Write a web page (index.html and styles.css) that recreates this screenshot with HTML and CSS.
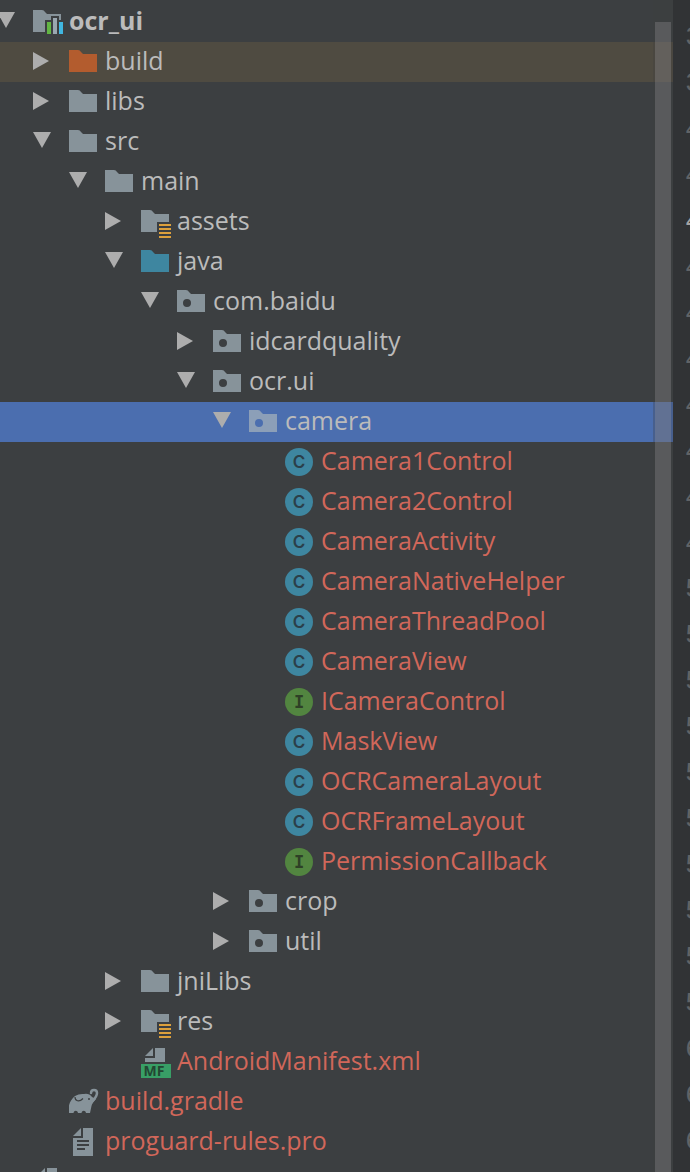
FILE: index.html
```html
<!DOCTYPE html>
<html lang="en">
<head>
<meta charset="UTF-8" />
<meta name="viewport" content="width=device-width, initial-scale=1" />
<title>ocr_ui</title>
<link rel="stylesheet" href="styles.css">
</head>
<body>

<!-- shared icons -->
<svg class="sprite" aria-hidden="true">
  <symbol id="open" viewBox="0 0 28 28"><path d="M0 4h18L9 20z" fill="#adadad"/></symbol>
  <symbol id="closed" viewBox="0 0 28 28"><path d="M0 4l16 9-16 9z" fill="#adadad"/></symbol>
  <symbol id="folder" viewBox="0 0 32 32"><path d="M0 4h9q2 0 3 2l2 2h14v18H0z" fill="currentColor"/></symbol>
  <symbol id="package" viewBox="0 0 32 32"><path fill-rule="evenodd" d="M0 4h9q2 0 3 2l2 2h14v18H0zM10 13a4 4 0 1 0 0 8 4 4 0 0 0 0-8z" fill="currentColor"/></symbol>
  <symbol id="resources" viewBox="0 0 32 32">
    <path d="M0 4h9q2 0 3 2l2 2h14v8H16v10H0z" fill="currentColor"/>
    <path d="M18 18h12v2H18zM18 22h12v2H18zM18 26h12v2H18zM18 30h12v2H18z" fill="#dca03c"/>
  </symbol>
  <symbol id="module" viewBox="0 0 32 32">
    <path d="M0 4h9q2 0 3 2l2 2h14v6h-2v-4h-8v4h-6v12H0z" fill="currentColor"/>
    <path d="M14 16h4v12h-4z" fill="#62b543"/>
    <path d="M20 12h4v16h-4z" fill="#9aa7b0"/>
    <path d="M26 16h4v12h-4z" fill="#40b6e0"/>
  </symbol>
  <symbol id="class" viewBox="0 0 32 32">
    <circle cx="14" cy="16" r="14" fill="#3e86a0"/>
    <text class="badge" x="14" y="22" fill="#2b3f49">C</text>
  </symbol>
  <symbol id="interface" viewBox="0 0 32 32">
    <circle cx="14" cy="16" r="14" fill="#528540"/>
    <text class="badge serifed" x="14" y="22" fill="#2e4026">I</text>
  </symbol>
  <symbol id="manifest" viewBox="0 0 32 32">
    <path d="M4 10l8-8v8zM14 2h10v14H4v-4h10z" fill="currentColor"/>
    <path d="M0 18h30v14H0z" fill="#389f66"/>
    <text class="badge bold" x="13" y="30" fill="#234733">MF</text>
  </symbol>
  <symbol id="gradle" viewBox="0 0 32 32">
    <path d="M-1 27C-1 20 1 14 6 10q4-2.500 9-2 5-1 8 3l4 2q-4 4-4.500 7L21 27h-4c-.500-3-4-3-4.500 0H9c-.500-3-4-3-4.500 0z" fill="currentColor"/>
    <path d="M22 7c0-4 6-4 6 0 0 4-3 6-6 10" fill="none" stroke="currentColor" stroke-width="2.500" stroke-linecap="round"/>
    <path d="M6 11c0 4 4 5.500 8 1.500" fill="none" stroke="#3c3f41" stroke-width="1.200"/>
    <circle cx="20" cy="13" r="1" fill="#3c3f41"/>
  </symbol>
  <symbol id="text" viewBox="0 0 32 32">
    <path fill-rule="evenodd" d="M4 10l8-8v8zM14 2h10v28H4V12h10zM8 14v2h12v-2zM8 18v2h12v-2zM8 22v2h8v-2z" fill="currentColor"/>
  </symbol>
</svg>

<main class="window">
  <nav class="project" aria-label="Project">
    <ul class="tree" id="tree"></ul>
    <div class="scrollbar"><div class="thumb"></div></div>
  </nav>
  <ol class="gutter" id="gutter"></ol>
</main>

<script src="tree.js"></script>
</body>
</html>
```
FILE: styles.css
```css
* {
  box-sizing: border-box;
}
body {
  margin: 0;
  background: #313335;
  color: #bbbbbb;
  font-family: "Open Sans", "Noto Sans", sans-serif;
  font-size: 25px;
}
.sprite {
  display: none;
}
.badge {
  font-family: Inter, sans-serif;
  font-size: 17px;
  font-weight: 600;
  text-anchor: middle;
}
.badge.serifed {
  font-family: "DejaVu Sans Mono", monospace;
  font-weight: bold;
}
.badge.bold {
  font-family: "Open Sans", sans-serif;
  font-size: 14px;
  font-weight: bold;
}
.window {
  display: flex;
  height: 100vh;
  overflow: hidden;
}
.project {
  position: relative;
  flex: 1;
  overflow: hidden;
  background: #3c3f41;
}
.tree {
  list-style: none;
  margin: 0 0 0 -3px;
  padding: 2px 0 0;
}
.row {
  display: flex;
  align-items: center;
  height: 40px;
  white-space: nowrap;
}
.row.excluded {
  background: #4f4b41;
}
.row.selected {
  background: #4b6eaf;
}
.level-1 { padding-left: 36px; }
.level-2 { padding-left: 72px; }
.level-3 { padding-left: 108px; }
.level-4 { padding-left: 144px; }
.level-5 { padding-left: 180px; }
.level-6 { padding-left: 216px; }
.level-7 { padding-left: 252px; }
.toggle {
  flex: none;
  width: 36px;
  height: 28px;
  padding: 0;
  border: none;
  background: none;
}
.toggle svg {
  display: block;
  width: 28px;
  height: 28px;
}
.icon {
  flex: none;
  width: 32px;
  height: 32px;
  margin-right: 4px;
  color: #87939a;
}
.selected .icon {
  color: #8c9fb8;
}
.build {
  color: #b35c2e;
}
.source {
  color: #3e86a0;
}
.label {
  padding-bottom: 4px;
  line-height: 36px;
}
.root {
  font-weight: bold;
}
.unversioned {
  color: #d1675a;
}
/* lies over the rows so that the highlights show through */
.scrollbar {
  position: absolute;
  top: 0;
  right: 0;
  bottom: 0;
  width: 20px;
  padding: 22px 2px 0;
  background: rgba(64, 64, 64, 0.3);
}
.thumb {
  height: 100%;
  background: rgba(166, 162, 164, 0.28);
}
.gutter {
  flex: none;
  width: 17px;
  margin: 0;
  padding: 15px 0 0 12px;
  overflow: hidden;
  list-style: none;
  color: #606366;
  font-family: "Liberation Mono", monospace;
  font-size: 28px;
}
.gutter li {
  height: 46px;
  line-height: 46px;
}
.gutter .current {
  color: #a4a3a3;
}
```
FILE: tree.js
```js
// level, icon, label, toggle state, label class, row class, icon class
const rows = [
  [0, 'module', 'ocr_ui', 'open', 'root'],
  [1, 'folder', 'build', 'closed', '', 'excluded', 'build'],
  [1, 'folder', 'libs', 'closed'],
  [1, 'folder', 'src', 'open'],
  [2, 'folder', 'main', 'open'],
  [3, 'resources', 'assets', 'closed'],
  [3, 'folder', 'java', 'open', '', '', 'source'],
  [4, 'package', 'com.baidu', 'open'],
  [5, 'package', 'idcardquality', 'closed'],
  [5, 'package', 'ocr.ui', 'open'],
  [6, 'package', 'camera', 'open', '', 'selected'],
  [7, 'class', 'Camera1Control', '', 'unversioned'],
  [7, 'class', 'Camera2Control', '', 'unversioned'],
  [7, 'class', 'CameraActivity', '', 'unversioned'],
  [7, 'class', 'CameraNativeHelper', '', 'unversioned'],
  [7, 'class', 'CameraThreadPool', '', 'unversioned'],
  [7, 'class', 'CameraView', '', 'unversioned'],
  [7, 'interface', 'ICameraControl', '', 'unversioned'],
  [7, 'class', 'MaskView', '', 'unversioned'],
  [7, 'class', 'OCRCameraLayout', '', 'unversioned'],
  [7, 'class', 'OCRFrameLayout', '', 'unversioned'],
  [7, 'interface', 'PermissionCallback', '', 'unversioned'],
  [6, 'package', 'crop', 'closed'],
  [6, 'package', 'util', 'closed'],
  [3, 'folder', 'jniLibs', 'closed'],
  [3, 'resources', 'res', 'closed'],
  [3, 'manifest', 'AndroidManifest.xml', '', 'unversioned'],
  [1, 'gradle', 'build.gradle', '', 'unversioned'],
  [1, 'text', 'proguard-rules.pro', '', 'unversioned'],
  [0, 'text', '.gitignore', '']
];

document.getElementById('tree').innerHTML = rows.map(([level, icon, label, state, text = '', row = '', tint = '']) => `
  <li class="row level-${level} ${row}">
    ${state
      ? `<button class="toggle" aria-label="${label}" aria-expanded="${state === 'open'}"><svg><use href="#${state}"/></svg></button>`
      : '<span class="toggle"></span>'}
    <svg class="icon ${tint}"><use href="#${icon}"/></svg>
    <span class="label ${text}">${label}</span>
  </li>`).join('');

let lines = '';
for (let n = 38; n <= 62; n++) {
  lines += `<li class="${n === 42 ? 'current' : ''}">${n}</li>`;
}
document.getElementById('gutter').innerHTML = lines;
```
